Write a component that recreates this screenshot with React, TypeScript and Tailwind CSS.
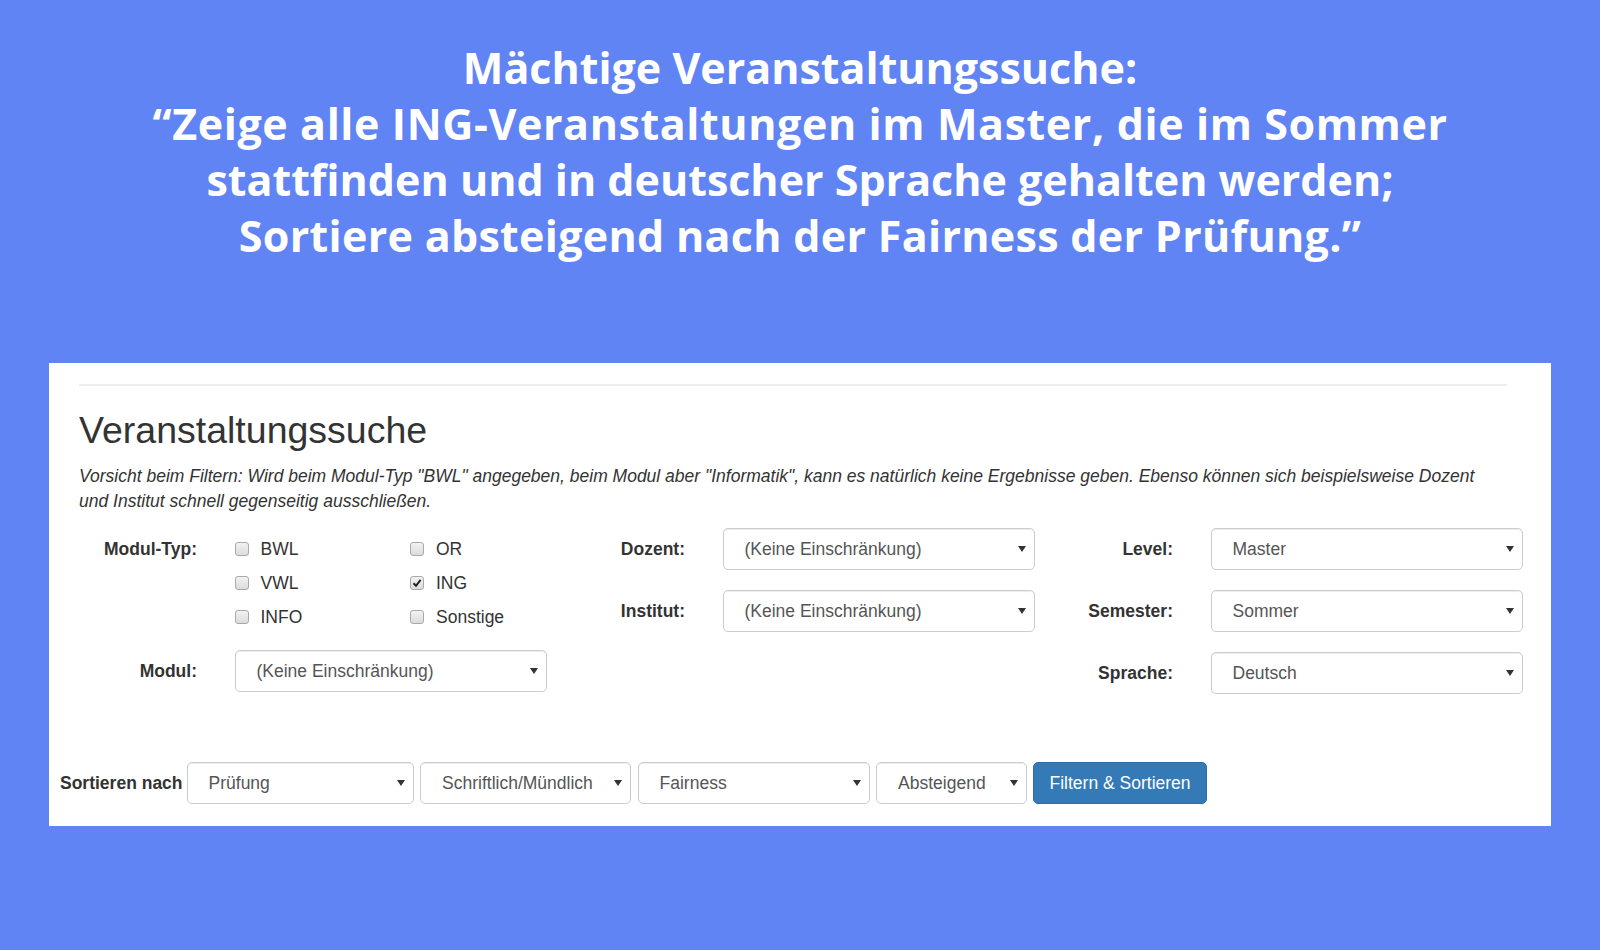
import React from 'react';

const Caret = () => (
  <svg width="8" height="6" viewBox="0 0 8 6" className="shrink-0">
    <path d="M0 0h8L4 6z" fill="#333" />
  </svg>
);

function Select({ value, className }: { value: string; className: string }) {
  return (
    <div
      className={`flex items-center h-[42.5px] rounded-[5px] border border-[#cccccc] bg-white pl-[21px] pr-[8px] text-[17.5px] text-[#555555] shadow-[inset_0_1px_1px_rgba(0,0,0,0.075)] ${className}`}
    >
      <span className="flex-1 whitespace-nowrap">{value}</span>
      <Caret />
    </div>
  );
}

function Check({ label, checked }: { label: string; checked?: boolean }) {
  return (
    <div className="flex items-center h-[33.7px]">
      <span className="relative w-[14px] h-[14px] rounded-[3px] border border-[#a9a9a9] bg-gradient-to-b from-[#f2f2f2] to-[#dcdcdc] flex items-center justify-center">
        {checked && (
          <svg width="10" height="10" viewBox="0 0 10 10">
            <path d="M1.5 5.2 L4 7.8 L8.6 1.8" stroke="#222" strokeWidth="2" fill="none" />
          </svg>
        )}
      </span>
      <span className="ml-[12px] text-[17.5px] text-[#333]">{label}</span>
    </div>
  );
}

function Label({ children }: { children: React.ReactNode }) {
  return <div className="w-[138px] shrink-0 text-right font-bold text-[17.5px] text-[#333]">{children}</div>;
}

function Row({ label, value }: { label: string; value: string }) {
  return (
    <div className="flex items-center h-[42.5px]">
      <Label>{label}</Label>
      <Select value={value} className="ml-[37.5px] w-[312.5px]" />
    </div>
  );
}

export default function App() {
  return (
    <div className="w-full h-[950px] bg-[#6184f4] overflow-hidden flex flex-col items-center">
      {/* headline */}
      <div className="pt-[40px] text-center text-white font-bold text-[43px] leading-[56px] font-['Open_Sans',sans-serif]">
        <div>Mächtige Veranstaltungssuche:</div>
        <div className="tracking-[0.6px]">“Zeige alle ING-Veranstaltungen im Master, die im Sommer</div>
        <div>stattfinden und in deutscher Sprache gehalten werden;</div>
        <div className="tracking-[0.3px]">Sortiere absteigend nach der Fairness der Prüfung.”</div>
      </div>

      {/* panel */}
      <div className="mt-[99px] w-[1502px] h-[463px] bg-white pt-[21px] pl-[30px] pr-[44px] font-['Liberation_Sans',Arial,sans-serif] text-[#333]">
        <div className="h-[2px] bg-[#eeeeee]" />
        <h2 className="mt-[24px] text-[37.5px] leading-[41px] text-[#333]">Veranstaltungssuche</h2>
        <p className="mt-[13px] italic text-[17.5px] leading-[25px] text-[#333] whitespace-nowrap">
          Vorsicht beim Filtern: Wird beim Modul-Typ "BWL" angegeben, beim Modul aber "Informatik", kann es natürlich keine Ergebnisse geben. Ebenso können sich beispielsweise Dozent
          <br />
          und Institut schnell gegenseitig ausschließen.
        </p>

        <div className="mt-[13.5px] -ml-[20px] flex">
          {/* column 1 */}
          <div className="w-[489px]">
            <div className="flex pt-[5px]">
              <Label>
                <div className="leading-[33.7px]">Modul-Typ:</div>
              </Label>
              <div className="ml-[37.5px] grid grid-cols-[175.5px_auto]">
                <Check label="BWL" />
                <Check label="OR" />
                <Check label="VWL" />
                <Check label="ING" checked />
                <Check label="INFO" />
                <Check label="Sonstige" />
              </div>
            </div>
            <div className="mt-[16.4px]">
              <Row label="Modul:" value="(Keine Einschränkung)" />
            </div>
          </div>

          {/* column 2 */}
          <div className="w-[489px] flex flex-col gap-[19.5px]">
            <Row label="Dozent:" value="(Keine Einschränkung)" />
            <Row label="Institut:" value="(Keine Einschränkung)" />
          </div>

          {/* column 3 */}
          <div className="w-[489px] flex flex-col gap-[19.5px]">
            <Row label="Level:" value="Master" />
            <Row label="Semester:" value="Sommer" />
            <Row label="Sprache:" value="Deutsch" />
          </div>
        </div>

        {/* sort bar */}
        <div className="mt-[67.5px] -ml-[19px] flex items-center">
          <span className="font-bold text-[17.5px] text-[#333] whitespace-nowrap">Sortieren nach</span>
          <Select value="Prüfung" className="ml-[4px] w-[227.5px]" />
          <Select value="Schriftlich/Mündlich" className="ml-[6px] w-[210.5px]" />
          <Select value="Fairness" className="ml-[7px] w-[232.5px]" />
          <Select value="Absteigend" className="ml-[6px] w-[151px]" />
          <button className="ml-[6px] h-[42.5px] w-[174px] rounded-[5px] border border-[#2e6da4] bg-[#337ab7] text-white text-[17.5px] whitespace-nowrap">
            Filtern &amp; Sortieren
          </button>
        </div>
      </div>
    </div>
  );
}
